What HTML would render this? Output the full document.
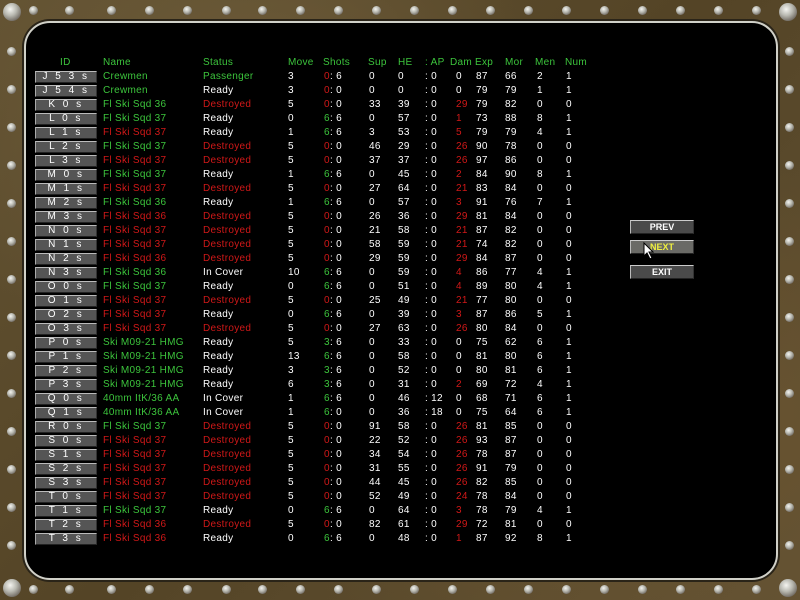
<!DOCTYPE html>
<html><head><meta charset="utf-8"><style>
body{margin:0;width:800px;height:600px;overflow:hidden;background:#5a4a2e;font-family:"Liberation Sans",sans-serif;}
#frame{position:absolute;left:0;top:0;width:800px;height:600px;background:
radial-gradient(ellipse at 30% 20%,#6e5c3a 0,transparent 40%),
radial-gradient(ellipse at 80% 70%,#6a5430 0,transparent 45%),
linear-gradient(135deg,#625232,#544426 50%,#625234);}
.rv{position:absolute;width:9px;height:9px;border-radius:50%;background:radial-gradient(circle at 40% 35%,#f4f4f0,#b8b8b0 40%,#605850 85%);}
.big{width:18px;height:18px;}
#panel{position:absolute;left:24px;top:21px;width:750px;height:555px;background:#000;border:2px solid #d0d0c8;border-radius:26px;box-shadow:0 0 0 2px #2a2418;}
.r{position:absolute;left:0;height:14px;width:800px;font-size:10px;line-height:12px;letter-spacing:.3px;color:#fff;}
.r>*{position:absolute;top:1px;font-style:normal;font-weight:normal;white-space:nowrap;}
.id{left:35px;width:60px;height:10px;line-height:10px;top:1px!important;background:#555;border-top:1px solid #bbb;border-left:1px solid #aaa;border-bottom:1px solid #222;border-right:1px solid #333;text-align:center;letter-spacing:2.5px;font-size:10px;}
.n{left:103px}.s{left:203px}.m{left:288px}.x1{left:324px}.x2{left:330px}.su{left:369px}.he{left:398px}.ap{left:425px}.d{left:456px}.e{left:476px}.mo{left:505px}.me{left:537px}.nu{left:566px}
.g{color:#3cc43c}.rd{color:#d01818}
.hd{color:#3cc43c}
.btn{position:absolute;left:630px;width:62px;height:12px;background:#4a4a4a;border-top:1px solid #ccc;border-left:1px solid #bbb;border-bottom:1px solid #222;border-right:1px solid #333;color:#fff;font-size:9px;line-height:12px;text-align:center;font-weight:bold;}
</style></head><body>
<div id="frame">
<div class="rv big" style="left:3px;top:3px"></div><div class="rv big" style="left:779px;top:3px"></div><div class="rv big" style="left:3px;top:579px"></div><div class="rv big" style="left:779px;top:579px"></div>
<div class="rv" style="left:29px;top:6px"></div><div class="rv" style="left:65px;top:6px"></div><div class="rv" style="left:107px;top:6px"></div><div class="rv" style="left:145px;top:6px"></div><div class="rv" style="left:183px;top:6px"></div><div class="rv" style="left:222px;top:6px"></div><div class="rv" style="left:258px;top:6px"></div><div class="rv" style="left:296px;top:6px"></div><div class="rv" style="left:334px;top:6px"></div><div class="rv" style="left:372px;top:6px"></div><div class="rv" style="left:410px;top:6px"></div><div class="rv" style="left:448px;top:6px"></div><div class="rv" style="left:486px;top:6px"></div><div class="rv" style="left:524px;top:6px"></div><div class="rv" style="left:562px;top:6px"></div><div class="rv" style="left:600px;top:6px"></div><div class="rv" style="left:638px;top:6px"></div><div class="rv" style="left:676px;top:6px"></div><div class="rv" style="left:714px;top:6px"></div><div class="rv" style="left:752px;top:6px"></div>
<div class="rv" style="left:29px;top:585px"></div><div class="rv" style="left:65px;top:585px"></div><div class="rv" style="left:107px;top:585px"></div><div class="rv" style="left:145px;top:585px"></div><div class="rv" style="left:183px;top:585px"></div><div class="rv" style="left:222px;top:585px"></div><div class="rv" style="left:258px;top:585px"></div><div class="rv" style="left:296px;top:585px"></div><div class="rv" style="left:334px;top:585px"></div><div class="rv" style="left:372px;top:585px"></div><div class="rv" style="left:410px;top:585px"></div><div class="rv" style="left:448px;top:585px"></div><div class="rv" style="left:486px;top:585px"></div><div class="rv" style="left:524px;top:585px"></div><div class="rv" style="left:562px;top:585px"></div><div class="rv" style="left:600px;top:585px"></div><div class="rv" style="left:638px;top:585px"></div><div class="rv" style="left:676px;top:585px"></div><div class="rv" style="left:714px;top:585px"></div><div class="rv" style="left:752px;top:585px"></div>
<div class="rv" style="left:7px;top:47px"></div><div class="rv" style="left:7px;top:85px"></div><div class="rv" style="left:7px;top:123px"></div><div class="rv" style="left:7px;top:161px"></div><div class="rv" style="left:7px;top:199px"></div><div class="rv" style="left:7px;top:237px"></div><div class="rv" style="left:7px;top:275px"></div><div class="rv" style="left:7px;top:313px"></div><div class="rv" style="left:7px;top:351px"></div><div class="rv" style="left:7px;top:389px"></div><div class="rv" style="left:7px;top:427px"></div><div class="rv" style="left:7px;top:465px"></div><div class="rv" style="left:7px;top:503px"></div><div class="rv" style="left:7px;top:541px"></div>
<div class="rv" style="left:785px;top:47px"></div><div class="rv" style="left:785px;top:85px"></div><div class="rv" style="left:785px;top:123px"></div><div class="rv" style="left:785px;top:161px"></div><div class="rv" style="left:785px;top:199px"></div><div class="rv" style="left:785px;top:237px"></div><div class="rv" style="left:785px;top:275px"></div><div class="rv" style="left:785px;top:313px"></div><div class="rv" style="left:785px;top:351px"></div><div class="rv" style="left:785px;top:389px"></div><div class="rv" style="left:785px;top:427px"></div><div class="rv" style="left:785px;top:465px"></div><div class="rv" style="left:785px;top:503px"></div><div class="rv" style="left:785px;top:541px"></div>
</div>
<div id="panel"></div>

<div class="r hd" style="top:56px"><i style="left:60px">ID</i><i class="n">Name</i><i class="s">Status</i><i class="m">Move</i><i style="left:323px">Shots</i><i style="left:368px">Sup</i><i class="he">HE</i><i class="ap">: AP</i><i style="left:450px">Dam</i><i style="left:475px">Exp</i><i class="mo">Mor</i><i style="left:535px">Men</i><i style="left:565px">Num</i></div>

<div class="r" style="top:70px"><b class="id">J 5 3 s</b><i class="n g">Crewmen</i><i class="s g">Passenger</i><i class="m">3</i><i class="x1 rd">0</i><i class="x2">: 6</i><i class="su">0</i><i class="he">0</i><i class="ap">: 0</i><i class="d">0</i><i class="e">87</i><i class="mo">66</i><i class="me">2</i><i class="nu">1</i></div>
<div class="r" style="top:84px"><b class="id">J 5 4 s</b><i class="n g">Crewmen</i><i class="s">Ready</i><i class="m">3</i><i class="x1 rd">0</i><i class="x2">: 0</i><i class="su">0</i><i class="he">0</i><i class="ap">: 0</i><i class="d">0</i><i class="e">79</i><i class="mo">79</i><i class="me">1</i><i class="nu">1</i></div>
<div class="r" style="top:98px"><b class="id">K 0 s</b><i class="n g">Fl Ski Sqd 36</i><i class="s rd">Destroyed</i><i class="m">5</i><i class="x1 rd">0</i><i class="x2">: 0</i><i class="su">33</i><i class="he">39</i><i class="ap">: 0</i><i class="d rd">29</i><i class="e">79</i><i class="mo">82</i><i class="me">0</i><i class="nu">0</i></div>
<div class="r" style="top:112px"><b class="id">L 0 s</b><i class="n g">Fl Ski Sqd 37</i><i class="s">Ready</i><i class="m">0</i><i class="x1 g">6</i><i class="x2">: 6</i><i class="su">0</i><i class="he">57</i><i class="ap">: 0</i><i class="d rd">1</i><i class="e">73</i><i class="mo">88</i><i class="me">8</i><i class="nu">1</i></div>
<div class="r" style="top:126px"><b class="id">L 1 s</b><i class="n rd">Fl Ski Sqd 37</i><i class="s">Ready</i><i class="m">1</i><i class="x1 g">6</i><i class="x2">: 6</i><i class="su">3</i><i class="he">53</i><i class="ap">: 0</i><i class="d rd">5</i><i class="e">79</i><i class="mo">79</i><i class="me">4</i><i class="nu">1</i></div>
<div class="r" style="top:140px"><b class="id">L 2 s</b><i class="n g">Fl Ski Sqd 37</i><i class="s rd">Destroyed</i><i class="m">5</i><i class="x1 rd">0</i><i class="x2">: 0</i><i class="su">46</i><i class="he">29</i><i class="ap">: 0</i><i class="d rd">26</i><i class="e">90</i><i class="mo">78</i><i class="me">0</i><i class="nu">0</i></div>
<div class="r" style="top:154px"><b class="id">L 3 s</b><i class="n rd">Fl Ski Sqd 37</i><i class="s rd">Destroyed</i><i class="m">5</i><i class="x1 rd">0</i><i class="x2">: 0</i><i class="su">37</i><i class="he">37</i><i class="ap">: 0</i><i class="d rd">26</i><i class="e">97</i><i class="mo">86</i><i class="me">0</i><i class="nu">0</i></div>
<div class="r" style="top:168px"><b class="id">M 0 s</b><i class="n g">Fl Ski Sqd 37</i><i class="s">Ready</i><i class="m">1</i><i class="x1 g">6</i><i class="x2">: 6</i><i class="su">0</i><i class="he">45</i><i class="ap">: 0</i><i class="d rd">2</i><i class="e">84</i><i class="mo">90</i><i class="me">8</i><i class="nu">1</i></div>
<div class="r" style="top:182px"><b class="id">M 1 s</b><i class="n rd">Fl Ski Sqd 37</i><i class="s rd">Destroyed</i><i class="m">5</i><i class="x1 rd">0</i><i class="x2">: 0</i><i class="su">27</i><i class="he">64</i><i class="ap">: 0</i><i class="d rd">21</i><i class="e">83</i><i class="mo">84</i><i class="me">0</i><i class="nu">0</i></div>
<div class="r" style="top:196px"><b class="id">M 2 s</b><i class="n g">Fl Ski Sqd 36</i><i class="s">Ready</i><i class="m">1</i><i class="x1 g">6</i><i class="x2">: 6</i><i class="su">0</i><i class="he">57</i><i class="ap">: 0</i><i class="d rd">3</i><i class="e">91</i><i class="mo">76</i><i class="me">7</i><i class="nu">1</i></div>
<div class="r" style="top:210px"><b class="id">M 3 s</b><i class="n rd">Fl Ski Sqd 36</i><i class="s rd">Destroyed</i><i class="m">5</i><i class="x1 rd">0</i><i class="x2">: 0</i><i class="su">26</i><i class="he">36</i><i class="ap">: 0</i><i class="d rd">29</i><i class="e">81</i><i class="mo">84</i><i class="me">0</i><i class="nu">0</i></div>
<div class="r" style="top:224px"><b class="id">N 0 s</b><i class="n rd">Fl Ski Sqd 37</i><i class="s rd">Destroyed</i><i class="m">5</i><i class="x1 rd">0</i><i class="x2">: 0</i><i class="su">21</i><i class="he">58</i><i class="ap">: 0</i><i class="d rd">21</i><i class="e">87</i><i class="mo">82</i><i class="me">0</i><i class="nu">0</i></div>
<div class="r" style="top:238px"><b class="id">N 1 s</b><i class="n rd">Fl Ski Sqd 37</i><i class="s rd">Destroyed</i><i class="m">5</i><i class="x1 rd">0</i><i class="x2">: 0</i><i class="su">58</i><i class="he">59</i><i class="ap">: 0</i><i class="d rd">21</i><i class="e">74</i><i class="mo">82</i><i class="me">0</i><i class="nu">0</i></div>
<div class="r" style="top:252px"><b class="id">N 2 s</b><i class="n rd">Fl Ski Sqd 36</i><i class="s rd">Destroyed</i><i class="m">5</i><i class="x1 rd">0</i><i class="x2">: 0</i><i class="su">29</i><i class="he">59</i><i class="ap">: 0</i><i class="d rd">29</i><i class="e">84</i><i class="mo">87</i><i class="me">0</i><i class="nu">0</i></div>
<div class="r" style="top:266px"><b class="id">N 3 s</b><i class="n g">Fl Ski Sqd 36</i><i class="s">In Cover</i><i class="m">10</i><i class="x1 g">6</i><i class="x2">: 6</i><i class="su">0</i><i class="he">59</i><i class="ap">: 0</i><i class="d rd">4</i><i class="e">86</i><i class="mo">77</i><i class="me">4</i><i class="nu">1</i></div>
<div class="r" style="top:280px"><b class="id">O 0 s</b><i class="n g">Fl Ski Sqd 37</i><i class="s">Ready</i><i class="m">0</i><i class="x1 g">6</i><i class="x2">: 6</i><i class="su">0</i><i class="he">51</i><i class="ap">: 0</i><i class="d rd">4</i><i class="e">89</i><i class="mo">80</i><i class="me">4</i><i class="nu">1</i></div>
<div class="r" style="top:294px"><b class="id">O 1 s</b><i class="n rd">Fl Ski Sqd 37</i><i class="s rd">Destroyed</i><i class="m">5</i><i class="x1 rd">0</i><i class="x2">: 0</i><i class="su">25</i><i class="he">49</i><i class="ap">: 0</i><i class="d rd">21</i><i class="e">77</i><i class="mo">80</i><i class="me">0</i><i class="nu">0</i></div>
<div class="r" style="top:308px"><b class="id">O 2 s</b><i class="n rd">Fl Ski Sqd 37</i><i class="s">Ready</i><i class="m">0</i><i class="x1 g">6</i><i class="x2">: 6</i><i class="su">0</i><i class="he">39</i><i class="ap">: 0</i><i class="d rd">3</i><i class="e">87</i><i class="mo">86</i><i class="me">5</i><i class="nu">1</i></div>
<div class="r" style="top:322px"><b class="id">O 3 s</b><i class="n rd">Fl Ski Sqd 37</i><i class="s rd">Destroyed</i><i class="m">5</i><i class="x1 rd">0</i><i class="x2">: 0</i><i class="su">27</i><i class="he">63</i><i class="ap">: 0</i><i class="d rd">26</i><i class="e">80</i><i class="mo">84</i><i class="me">0</i><i class="nu">0</i></div>
<div class="r" style="top:336px"><b class="id">P 0 s</b><i class="n g">Ski M09-21 HMG</i><i class="s">Ready</i><i class="m">5</i><i class="x1 g">3</i><i class="x2">: 6</i><i class="su">0</i><i class="he">33</i><i class="ap">: 0</i><i class="d">0</i><i class="e">75</i><i class="mo">62</i><i class="me">6</i><i class="nu">1</i></div>
<div class="r" style="top:350px"><b class="id">P 1 s</b><i class="n g">Ski M09-21 HMG</i><i class="s">Ready</i><i class="m">13</i><i class="x1 g">6</i><i class="x2">: 6</i><i class="su">0</i><i class="he">58</i><i class="ap">: 0</i><i class="d">0</i><i class="e">81</i><i class="mo">80</i><i class="me">6</i><i class="nu">1</i></div>
<div class="r" style="top:364px"><b class="id">P 2 s</b><i class="n g">Ski M09-21 HMG</i><i class="s">Ready</i><i class="m">3</i><i class="x1 g">3</i><i class="x2">: 6</i><i class="su">0</i><i class="he">52</i><i class="ap">: 0</i><i class="d">0</i><i class="e">80</i><i class="mo">81</i><i class="me">6</i><i class="nu">1</i></div>
<div class="r" style="top:378px"><b class="id">P 3 s</b><i class="n g">Ski M09-21 HMG</i><i class="s">Ready</i><i class="m">6</i><i class="x1 g">3</i><i class="x2">: 6</i><i class="su">0</i><i class="he">31</i><i class="ap">: 0</i><i class="d rd">2</i><i class="e">69</i><i class="mo">72</i><i class="me">4</i><i class="nu">1</i></div>
<div class="r" style="top:392px"><b class="id">Q 0 s</b><i class="n g">40mm ItK/36 AA</i><i class="s">In Cover</i><i class="m">1</i><i class="x1 g">6</i><i class="x2">: 6</i><i class="su">0</i><i class="he">46</i><i class="ap">: 12</i><i class="d">0</i><i class="e">68</i><i class="mo">71</i><i class="me">6</i><i class="nu">1</i></div>
<div class="r" style="top:406px"><b class="id">Q 1 s</b><i class="n g">40mm ItK/36 AA</i><i class="s">In Cover</i><i class="m">1</i><i class="x1 g">6</i><i class="x2">: 0</i><i class="su">0</i><i class="he">36</i><i class="ap">: 18</i><i class="d">0</i><i class="e">75</i><i class="mo">64</i><i class="me">6</i><i class="nu">1</i></div>
<div class="r" style="top:420px"><b class="id">R 0 s</b><i class="n g">Fl Ski Sqd 37</i><i class="s rd">Destroyed</i><i class="m">5</i><i class="x1 rd">0</i><i class="x2">: 0</i><i class="su">91</i><i class="he">58</i><i class="ap">: 0</i><i class="d rd">26</i><i class="e">81</i><i class="mo">85</i><i class="me">0</i><i class="nu">0</i></div>
<div class="r" style="top:434px"><b class="id">S 0 s</b><i class="n rd">Fl Ski Sqd 37</i><i class="s rd">Destroyed</i><i class="m">5</i><i class="x1 rd">0</i><i class="x2">: 0</i><i class="su">22</i><i class="he">52</i><i class="ap">: 0</i><i class="d rd">26</i><i class="e">93</i><i class="mo">87</i><i class="me">0</i><i class="nu">0</i></div>
<div class="r" style="top:448px"><b class="id">S 1 s</b><i class="n rd">Fl Ski Sqd 37</i><i class="s rd">Destroyed</i><i class="m">5</i><i class="x1 rd">0</i><i class="x2">: 0</i><i class="su">34</i><i class="he">54</i><i class="ap">: 0</i><i class="d rd">26</i><i class="e">78</i><i class="mo">87</i><i class="me">0</i><i class="nu">0</i></div>
<div class="r" style="top:462px"><b class="id">S 2 s</b><i class="n rd">Fl Ski Sqd 37</i><i class="s rd">Destroyed</i><i class="m">5</i><i class="x1 rd">0</i><i class="x2">: 0</i><i class="su">31</i><i class="he">55</i><i class="ap">: 0</i><i class="d rd">26</i><i class="e">91</i><i class="mo">79</i><i class="me">0</i><i class="nu">0</i></div>
<div class="r" style="top:476px"><b class="id">S 3 s</b><i class="n rd">Fl Ski Sqd 37</i><i class="s rd">Destroyed</i><i class="m">5</i><i class="x1 rd">0</i><i class="x2">: 0</i><i class="su">44</i><i class="he">45</i><i class="ap">: 0</i><i class="d rd">26</i><i class="e">82</i><i class="mo">85</i><i class="me">0</i><i class="nu">0</i></div>
<div class="r" style="top:490px"><b class="id">T 0 s</b><i class="n rd">Fl Ski Sqd 37</i><i class="s rd">Destroyed</i><i class="m">5</i><i class="x1 rd">0</i><i class="x2">: 0</i><i class="su">52</i><i class="he">49</i><i class="ap">: 0</i><i class="d rd">24</i><i class="e">78</i><i class="mo">84</i><i class="me">0</i><i class="nu">0</i></div>
<div class="r" style="top:504px"><b class="id">T 1 s</b><i class="n g">Fl Ski Sqd 37</i><i class="s">Ready</i><i class="m">0</i><i class="x1 g">6</i><i class="x2">: 6</i><i class="su">0</i><i class="he">64</i><i class="ap">: 0</i><i class="d rd">3</i><i class="e">78</i><i class="mo">79</i><i class="me">4</i><i class="nu">1</i></div>
<div class="r" style="top:518px"><b class="id">T 2 s</b><i class="n rd">Fl Ski Sqd 36</i><i class="s rd">Destroyed</i><i class="m">5</i><i class="x1 rd">0</i><i class="x2">: 0</i><i class="su">82</i><i class="he">61</i><i class="ap">: 0</i><i class="d rd">29</i><i class="e">72</i><i class="mo">81</i><i class="me">0</i><i class="nu">0</i></div>
<div class="r" style="top:532px"><b class="id">T 3 s</b><i class="n rd">Fl Ski Sqd 36</i><i class="s">Ready</i><i class="m">0</i><i class="x1 g">6</i><i class="x2">: 6</i><i class="su">0</i><i class="he">48</i><i class="ap">: 0</i><i class="d rd">1</i><i class="e">87</i><i class="mo">92</i><i class="me">8</i><i class="nu">1</i></div>

<div class="btn" style="top:220px">PREV</div>
<div class="btn" style="top:240px;background:#6a6a66;color:#f0f040">NEXT</div>
<div class="btn" style="top:265px">EXIT</div>
<svg style="position:absolute;left:643px;top:242px" width="12" height="18" viewBox="0 0 12 18"><path d="M1 1 L1 14 L4 11 L7 17 L9 16 L6 10 L10 10 Z" fill="#fff" stroke="#000" stroke-width="1"/></svg>
</body></html>
